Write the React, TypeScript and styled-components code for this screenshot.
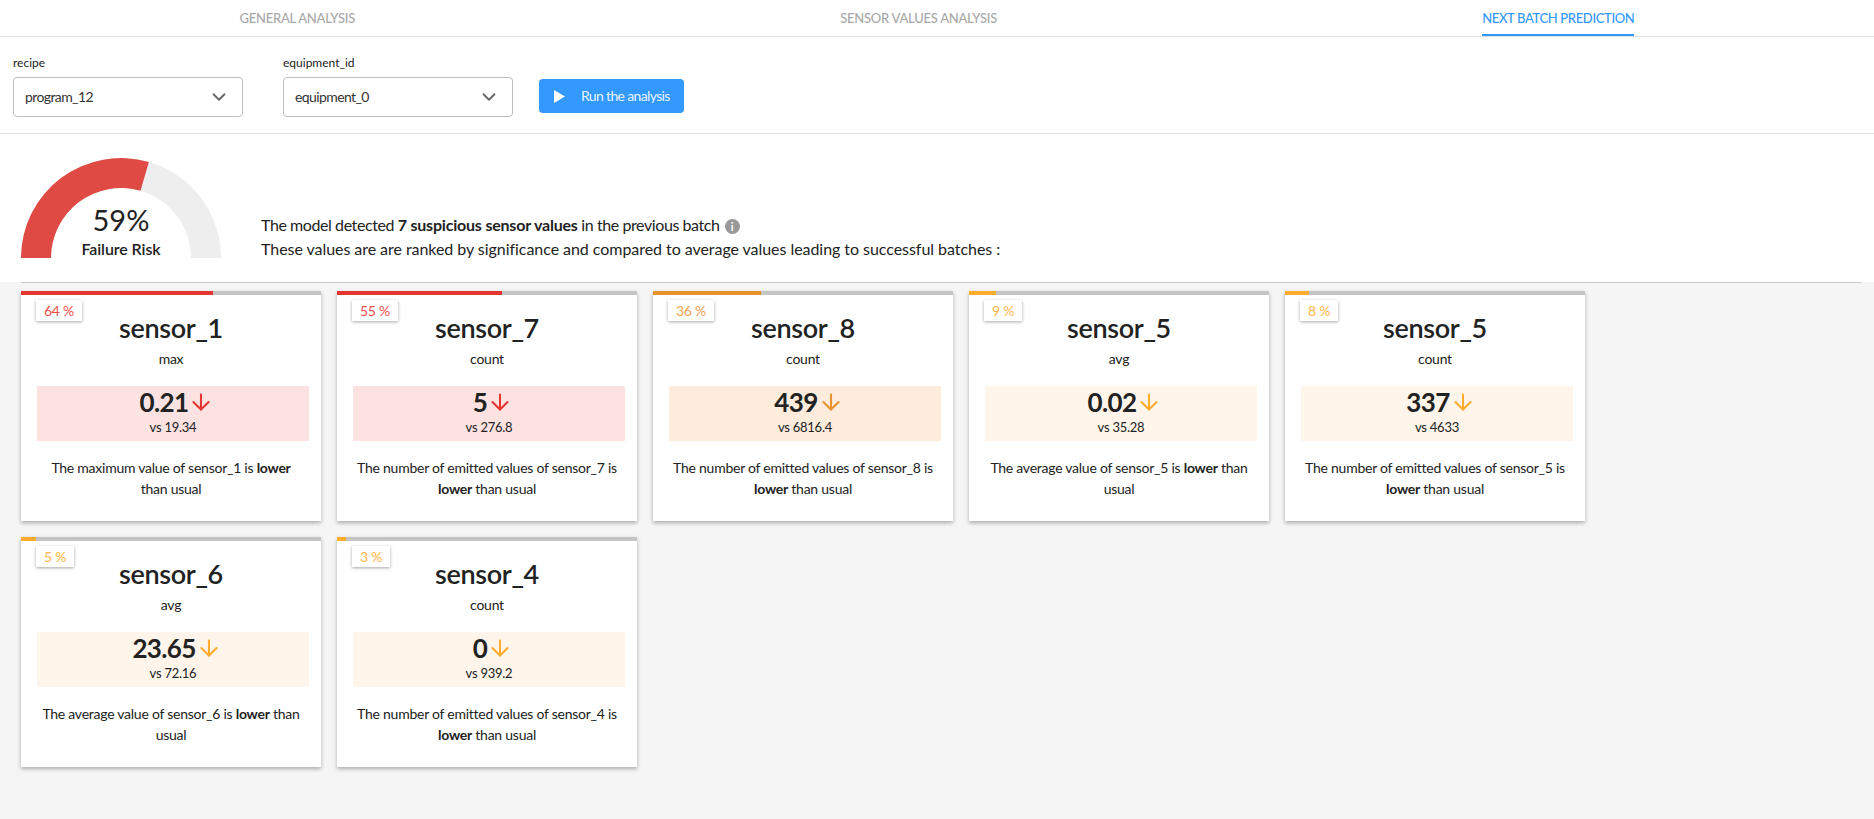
import React from 'react';
import styled, { createGlobalStyle } from 'styled-components';
import { ArrowDown, ChevronDown } from 'lucide-react';

interface Sensor {
    id: number,
    name: string,
    stat: string,
    risk: number,
    value: string,
    reference: string,
    subject: string,
    level: Level,
}

type Level = 'high' | 'medium' | 'low';

const levelColors: Record<Level, { main: string, badge: string, soft: string }> = {
    high: { main: '#e53530', badge: '#ef4f4a', soft: '#fde2e2' },
    medium: { main: '#e8922e', badge: '#f0a050', soft: '#fdebdb' },
    low: { main: '#ffab2e', badge: '#ffb548', soft: '#fff5ea' },
};

const sensors: Sensor[] = [
    { id: 1, name: 'sensor_1', stat: 'max', risk: 64, value: '0.21', reference: '19.34', subject: 'The maximum value', level: 'high' },
    { id: 2, name: 'sensor_7', stat: 'count', risk: 55, value: '5', reference: '276.8', subject: 'The number of emitted values', level: 'high' },
    { id: 3, name: 'sensor_8', stat: 'count', risk: 36, value: '439', reference: '6816.4', subject: 'The number of emitted values', level: 'medium' },
    { id: 4, name: 'sensor_5', stat: 'avg', risk: 9, value: '0.02', reference: '35.28', subject: 'The average value', level: 'low' },
    { id: 5, name: 'sensor_5', stat: 'count', risk: 8, value: '337', reference: '4633', subject: 'The number of emitted values', level: 'low' },
    { id: 6, name: 'sensor_6', stat: 'avg', risk: 5, value: '23.65', reference: '72.16', subject: 'The average value', level: 'low' },
    { id: 7, name: 'sensor_4', stat: 'count', risk: 3, value: '0', reference: '939.2', subject: 'The number of emitted values', level: 'low' },
];

const GlobalStyle = createGlobalStyle`
    html, body {
        margin: 0;
        padding: 0;
        background: #f5f5f5;
    }

    body {
        font-family: Lato, "Liberation Sans", sans-serif;
        color: #222;
        letter-spacing: -0.25px;
    }
`;

const Page = styled.div`
    min-height: 819px;
    overflow: hidden;
`;

const TabsBar = styled.div`
    background: #fff;
    border-bottom: 1px solid #e0e0e0;
`;

const Tabs = styled.nav`
    display: flex;
    justify-content: space-around;
    height: 36px;
    margin: 0 -3px;
`;

const Tab = styled.div<{ $active?: boolean }>`
    height: 36px;
    box-sizing: border-box;
    line-height: 36px;
    font-size: 13px;
    font-weight: 500;
    white-space: nowrap;
    letter-spacing: ${(p) => (p.$active ? '-0.35px' : '-0.25px')};
    color: ${(p) => (p.$active ? '#3399ff' : '#a8a8a8')};
    border-bottom: 2px solid ${(p) => (p.$active ? '#3399ff' : 'transparent')};
`;

const FilterBar = styled.section`
    display: flex;
    align-items: flex-end;
    height: 96px;
    padding: 0 13px;
    background: #fff;
    border-bottom: 1px solid #e0e0e0;
`;

const Field = styled.label`
    display: block;
    margin: 0 40px 16px 0;
`;

const FieldName = styled.div`
    height: 16px;
    margin-bottom: 6px;
    font-size: 12px;
    line-height: 16px;
    letter-spacing: 0;
`;

const Select = styled.div`
    display: flex;
    align-items: center;
    justify-content: space-between;
    box-sizing: border-box;
    width: 230px;
    height: 40px;
    padding: 0 12px 2px 11px;
    background: #fff;
    border: 1px solid #bdbdbd;
    border-radius: 4px;
    font-size: 14px;
    letter-spacing: -0.6px;
    color: #333;

    svg {
        margin-top: 2px;
        color: #666;
    }
`;

const RunButton = styled.button`
    display: flex;
    align-items: center;
    width: 145px;
    height: 34px;
    margin: 0 0 20px -14px;
    padding: 0 0 2px 15px;
    background: #3399ff;
    border: none;
    border-radius: 4px;
    font-family: inherit;
    font-size: 14px;
    letter-spacing: -0.65px;
    color: rgba(255, 255, 255, 0.9);

    svg {
        margin: 2px 16px 0 0;
    }
`;

const Summary = styled.section`
    display: flex;
    align-items: flex-end;
    padding: 24px 0 24px 21px;
    background: #fff;
`;

const Gauge = styled.div`
    position: relative;
    flex: none;
    width: 200px;
    height: 100px;
    margin-right: 40px;
`;

const GaugeLabel = styled.div`
    position: absolute;
    left: 0;
    right: 0;
    bottom: -1px;
    text-align: center;
`;

const GaugeValue = styled.div`
    margin-bottom: 1px;
    font-size: 29px;
    line-height: 36px;
    letter-spacing: 0;
`;

const GaugeCaption = styled.div`
    font-size: 16px;
    font-weight: 600;
    line-height: 20px;
    letter-spacing: -0.1px;
`;

const SummaryText = styled.div`
    margin-bottom: -3px;
    font-size: 16px;
    line-height: 24px;
`;

const SummaryLine = styled.div<{ $spacing: number }>`
    letter-spacing: ${(p) => p.$spacing}px;
`;

const SummaryStrong = styled.strong`
    font-weight: 700;
    letter-spacing: -0.2px;
`;

const InfoDot = styled.span`
    display: inline-block;
    width: 15px;
    height: 15px;
    margin-left: 5px;
    vertical-align: 0;
    border-radius: 50%;
    background: #999;
    color: #fff;
    font-size: 11px;
    font-weight: 700;
    line-height: 15px;
    text-align: center;
    letter-spacing: 0;
`;

const Divider = styled.hr`
    height: 1px;
    margin: 0 13px 8px 21px;
    border: none;
    background: #c8c8c8;
`;

const CardGrid = styled.div`
    display: flex;
    flex-wrap: wrap;
    gap: 16px;
    padding-left: 21px;
`;

const Card = styled.article`
    position: relative;
    width: 300px;
    height: 230px;
    background: #fff;
    box-shadow: 0 2px 4px rgba(0, 0, 0, 0.3);
    text-align: center;
`;

const Track = styled.div`
    height: 4px;
    background: #c4c4c4;
`;

const TrackFill = styled.div<{ $level: Level }>`
    height: 100%;
    background: ${(p) => levelColors[p.$level].main};
`;

const Badge = styled.div<{ $level: Level }>`
    position: absolute;
    top: 9px;
    left: 15px;
    height: 21px;
    padding: 0 8px;
    background: #fff;
    box-shadow: 0 1px 3px rgba(0, 0, 0, 0.35);
    font-size: 14px;
    line-height: 21px;
    color: ${(p) => levelColors[p.$level].badge};
`;

const SensorName = styled.h2`
    margin: 15px 0 3px;
    font-size: 27px;
    font-weight: 600;
    line-height: 36px;
    letter-spacing: -0.35px;
`;

const StatName = styled.div`
    font-size: 14px;
    line-height: 20px;
`;

const ValueBox = styled.div<{ $level: Level }>`
    height: 55px;
    margin: 17px 12px 0 16px;
    padding-top: 1px;
    box-sizing: border-box;
    background: ${(p) => levelColors[p.$level].soft};
`;

const ValueRow = styled.div<{ $level: Level }>`
    display: flex;
    align-items: center;
    justify-content: center;
    height: 30px;
    margin-bottom: 2px;
    padding-left: 8px;
    font-size: 26px;
    font-weight: 700;
    letter-spacing: -0.65px;

    svg {
        flex: none;
        color: ${(p) => levelColors[p.$level].main};
    }
`;

const Versus = styled.div`
    font-size: 13px;
    line-height: 17px;
`;

const Description = styled.p`
    margin: 16px 20px 0;
    font-size: 14px;
    line-height: 21px;
`;

const Tag = styled.strong`
    font-weight: 700;
`;

const SensorCard: React.FC<{ sensor: Sensor }> = ({ sensor }) => (
    <Card>
        <Track>
            <TrackFill $level={sensor.level} style={{ width: `${sensor.risk}%` }} />
        </Track>
        <Badge $level={sensor.level}>{sensor.risk} %</Badge>
        <SensorName>{sensor.name}</SensorName>
        <StatName>{sensor.stat}</StatName>
        <ValueBox $level={sensor.level}>
            <ValueRow $level={sensor.level}>
                {sensor.value}
                <ArrowDown size={26} strokeWidth={1.9} />
            </ValueRow>
            <Versus>vs {sensor.reference}</Versus>
        </ValueBox>
        <Description>
            {sensor.subject} of {sensor.name} is <Tag>lower</Tag> <span>than</span> <span>usual</span>
        </Description>
    </Card>
);

const App: React.FC = () => (
    <Page>
        <GlobalStyle />
        <TabsBar>
            <Tabs>
                <Tab>GENERAL ANALYSIS</Tab>
                <Tab>SENSOR VALUES ANALYSIS</Tab>
                <Tab $active>NEXT BATCH PREDICTION</Tab>
            </Tabs>
        </TabsBar>
        <FilterBar>
            <Field>
                <FieldName>recipe</FieldName>
                <Select>
                    program_12
                    <ChevronDown size={22} strokeWidth={2} />
                </Select>
            </Field>
            <Field>
                <FieldName>equipment_id</FieldName>
                <Select>
                    equipment_0
                    <ChevronDown size={22} strokeWidth={2} />
                </Select>
            </Field>
            <RunButton>
                <svg width="11" height="13" viewBox="0 0 11 13">
                    <path d="M0 0 L11 6.5 L0 13 Z" fill="#fff" />
                </svg>
                Run the analysis
            </RunButton>
        </FilterBar>
        <Summary>
            <Gauge>
                <svg width="200" height="100" viewBox="0 0 200 100">
                    <path d="M0 100 A100 100 0 0 1 200 100 L170 100 A70 70 0 0 0 30 100 Z" fill="#eeeeee" />
                    <path d="M0 100 A100 100 0 0 1 127.9 4 L119.5 32.8 A70 70 0 0 0 30 100 Z" fill="#e04a44" />
                </svg>
                <GaugeLabel>
                    <GaugeValue>59%</GaugeValue>
                    <GaugeCaption>Failure Risk</GaugeCaption>
                </GaugeLabel>
            </Gauge>
            <SummaryText>
                <SummaryLine $spacing={-0.42}>
                    The model detected <SummaryStrong>7 suspicious sensor values</SummaryStrong> in the previous batch
                    <InfoDot>i</InfoDot>
                </SummaryLine>
                <SummaryLine $spacing={-0.05}>
                    These values are are ranked by significance and compared to average values leading to successful batches :
                </SummaryLine>
            </SummaryText>
        </Summary>
        <Divider />
        <CardGrid>
            {sensors.map((sensor) => (
                <SensorCard sensor={sensor} key={sensor.id} />
            ))}
        </CardGrid>
    </Page>
);

export default App;
